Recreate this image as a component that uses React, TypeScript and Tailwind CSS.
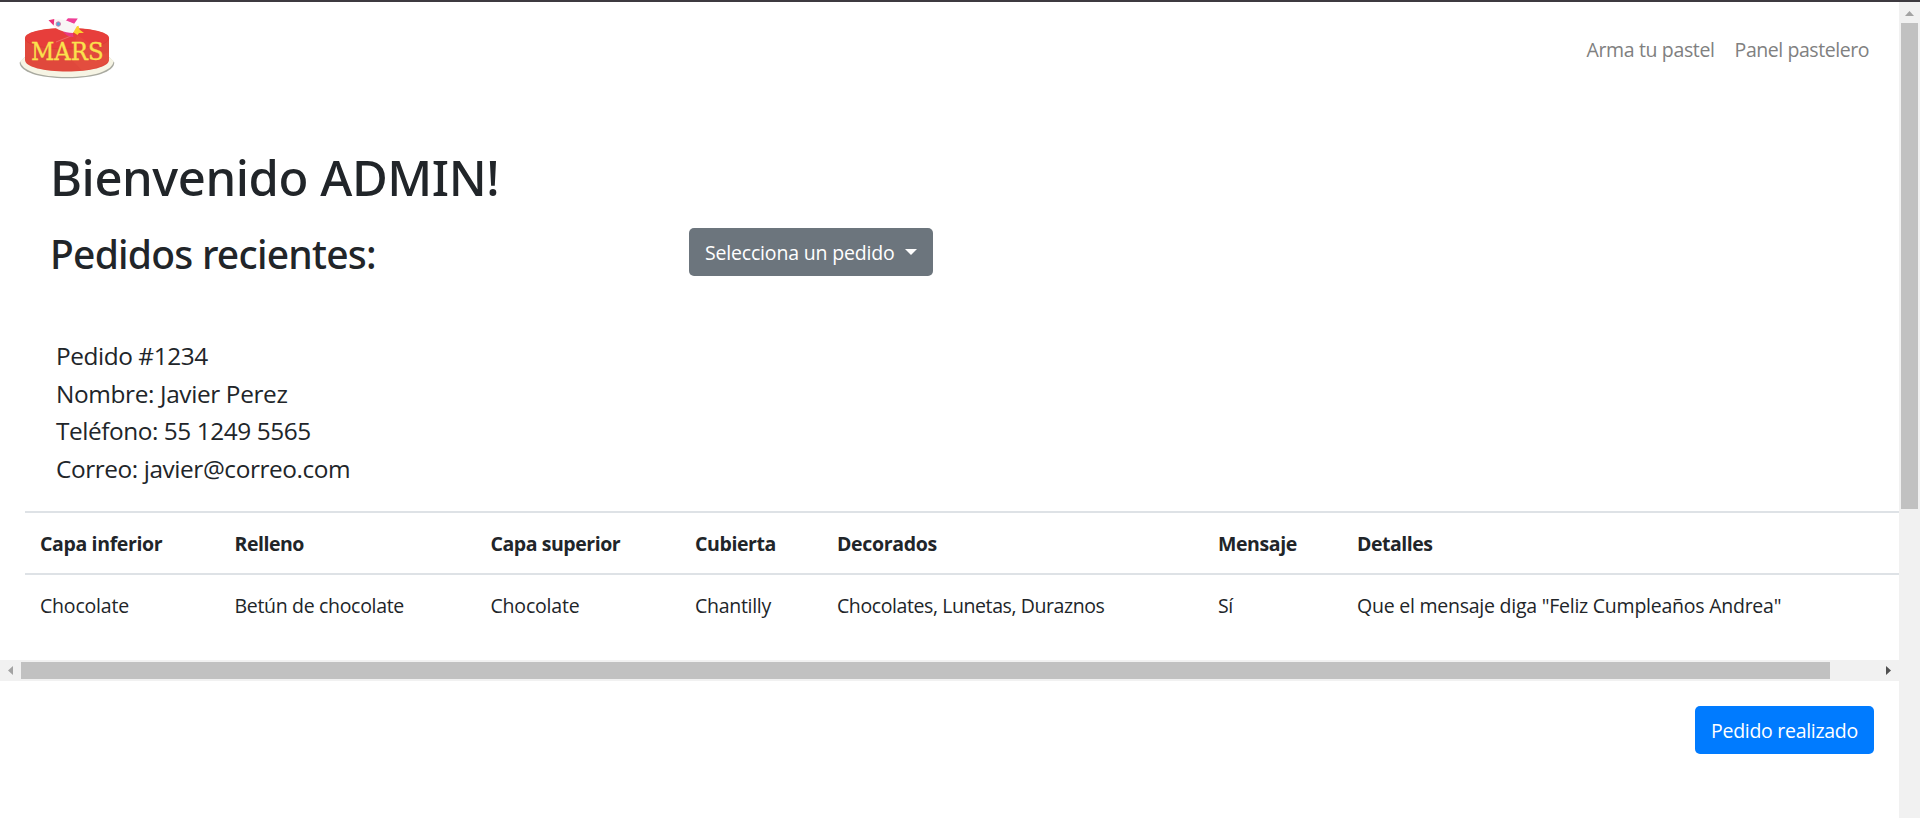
import type { ReactNode } from "react";

function Logo() {
  return (
    <svg viewBox="19 16 96 64" className="mb-[3px] block h-[64px] w-[96px]" role="img" aria-label="MARS">
      <path d="M19.6 62.5C20 72 39 78.2 67 78.2S114 72 114.3 62.5L109 57H25Z" fill="#a9aaa0" />
      <path d="M20.3 61C21 70.8 40 77 67 77S113 70.8 113.6 61L109 57H25Z" fill="#f6f4e4" />
      <path d="M25 38C25 32 43 28 67 28S109 32 109 38V60C109 67 90 71.5 67 71.5S25 67 25 60Z" fill="#e0483c" />
      <ellipse cx="67" cy="38.5" rx="42" ry="10.5" fill="#e73e3b" />
      <path d="M25.4 39C27 45 45 49 67 49S107 45 108.6 39" fill="none" stroke="#d93b33" strokeWidth="0.7" />
      <path d="M77 35L98 49 84 61 109 52V60C106 65 95 69 82 70.5L70 58Z" fill="#ea5a45" opacity="0.25" />
      <path d="M71 36L56 42" stroke="#ee8a80" strokeWidth="0.6" />
      <path d="M65.5 21L68 18.2 77.8 18.4 74 24Z" fill="#ee3f97" />
      <path d="M62 30L72.5 31.5 73.5 37C69 37.4 65 35 62 30Z" fill="#e83a83" />
      <path d="M74 27L78.5 25.8 79.5 29.5 84 33 79 33 77.5 35 73 32Z" fill="#fbd12f" />
      <path d="M53 19.8C60 17.8 71 21 77 26L73 33C64 32.5 56 29.5 53 25.5Z" fill="#f8f5f4" />
      <path d="M48.5 20.2L54.3 19 53.7 25.4Z" fill="#ed2f78" />
      <circle cx="58.3" cy="24" r="2.2" fill="#4eabd9" stroke="#d678a9" strokeWidth="1" />
      <text x="31" y="59.8" fontFamily="DejaVu Serif, serif" fontSize="24.5" textLength="72.5" lengthAdjust="spacingAndGlyphs" fill="#fae24d" stroke="#fae24d" strokeWidth="0.3">
        MARS
      </text>
    </svg>
  );
}

function Th({ children, className }: { children: ReactNode; className: string }) {
  return (
    <th className={`border-y-2 border-[#dee2e6] pt-[16px] pb-[14px] pl-[15px] text-left align-bottom font-bold whitespace-nowrap ${className}`}>
      {children}
    </th>
  );
}

function Td({ children, className }: { children: ReactNode; className: string }) {
  return <td className={`pt-[16px] pb-[14px] pl-[15px] align-top whitespace-nowrap ${className}`}>{children}</td>;
}

function OrdersTable() {
  return (
    <table className="w-[1874px] table-fixed border-separate border-spacing-0 text-[19.5px] leading-[30px]">
      <colgroup>
        <col className="w-[194.5px]" />
        <col className="w-[256px]" />
        <col className="w-[204.5px]" />
        <col className="w-[142px]" />
        <col className="w-[381px]" />
        <col className="w-[139px]" />
        <col />
      </colgroup>
      <thead>
        <tr>
          <Th className="tracking-[-0.36px]">Capa inferior</Th>
          <Th className="tracking-[-0.48px]">Relleno</Th>
          <Th className="tracking-[-0.44px]">Capa superior</Th>
          <Th className="tracking-[-0.4px]">Cubierta</Th>
          <Th className="tracking-[-0.32px]">Decorados</Th>
          <Th className="tracking-[-0.4px]">Mensaje</Th>
          <Th className="tracking-[-0.48px]">Detalles</Th>
        </tr>
      </thead>
      <tbody>
        <tr>
          <Td className="tracking-[-0.19px]">Chocolate</Td>
          <Td className="tracking-[-0.32px]">Betún de chocolate</Td>
          <Td className="tracking-[-0.19px]">Chocolate</Td>
          <Td className="tracking-[-0.28px]">Chantilly</Td>
          <Td className="tracking-[-0.41px]">Chocolates, Lunetas, Duraznos</Td>
          <Td className="tracking-[-0.5px]">Sí</Td>
          <Td className="tracking-[-0.24px]">Que el mensaje diga "Feliz Cumpleaños Andrea"</Td>
        </tr>
      </tbody>
    </table>
  );
}

function HorizontalScrollbar() {
  return (
    <div className="flex h-[21px] items-center bg-[#f1f1f1]">
      <svg width="21" height="21" viewBox="0 0 21 21" className="shrink-0">
        <path d="M8 10.5L13 6V15Z" fill="#a3a3a3" />
      </svg>
      <div className="h-[17px] w-[1809px] bg-[#c1c1c1]" />
      <div className="grow" />
      <svg width="21" height="21" viewBox="0 0 21 21" className="shrink-0">
        <path d="M13 10.5L8 6V15Z" fill="#505050" />
      </svg>
    </div>
  );
}

function VerticalScrollbar() {
  return (
    <div className="flex w-[21px] shrink-0 flex-col items-center bg-[#f1f1f1]">
      <svg width="21" height="21" viewBox="0 0 21 21" className="shrink-0">
        <path d="M6 14H15L10.5 9Z" fill="#a3a3a3" />
      </svg>
      <div className="h-[486px] w-[17px] bg-[#c1c1c1]" />
    </div>
  );
}

export default function App() {
  return (
    <div className="flex h-[818px] w-[1920px] flex-col overflow-hidden bg-white font-['Open_Sans','Noto_Sans',sans-serif] text-[#212529]">
      <div className="h-[2px] shrink-0 bg-[#3d3a40]" />
      <div className="flex min-h-0 grow">
        <div className="flex w-[1899px] shrink-0 flex-col overflow-hidden">
          <nav className="flex h-[95px] items-center justify-between pr-[30px] pl-[19px]">
            <Logo />
            <div className="flex gap-[20px] text-[19.5px] leading-[30px] text-[#808080]">
              <a className="tracking-[-0.36px]">Arma tu pastel</a>
              <a className="tracking-[-0.44px]">Panel pastelero</a>
            </div>
          </nav>

          <h1 className="mt-[50px] pl-[50px] font-['Noto_Sans',sans-serif] text-[49px] leading-[60px] font-medium tracking-[-0.44px]">Bienvenido ADMIN!</h1>
          <div className="mt-[21px] flex h-[48px] pl-[50px]">
            <h2 className="mt-[2px] w-[639px] font-['Noto_Sans',sans-serif] text-[39px] leading-[47px] font-medium tracking-[-0.76px]">Pedidos recientes:</h2>
            <button className="flex h-[48px] w-[244px] items-center rounded-[5px] bg-[#6c757d] pt-[2px] pl-[16px] text-[19.5px] leading-[30px] tracking-[-0.18px] text-white">
              Selecciona un pedido
              <svg width="12" height="6" viewBox="0 0 12 6" className="mb-[3px] ml-[10px]">
                <path d="M0 0H12L6 6Z" fill="currentColor" />
              </svg>
            </button>
          </div>

          <div className="mt-[61px] pl-[56px] text-[24.4px] leading-[37.5px]">
            <p className="tracking-[-0.43px]">Pedido #1234</p>
            <p className="tracking-[-0.37px]">Nombre: Javier Perez</p>
            <p className="tracking-[-0.44px]">Teléfono: 55 1249 5565</p>
            <p className="tracking-[-0.42px]">Correo: javier@correo.com</p>
          </div>

          <div className="mt-[24px] h-[149px] shrink-0 overflow-hidden pl-[25px]">
            <OrdersTable />
          </div>
          <HorizontalScrollbar />

          <div className="mt-[25px] flex justify-end pr-[25px]">
            <button className="h-[48px] w-[179px] rounded-[5px] bg-[#007bff] pt-[2px] text-[19.5px] leading-[30px] tracking-[-0.29px] text-white">
              Pedido realizado
            </button>
          </div>
        </div>
        <VerticalScrollbar />
      </div>
    </div>
  );
}
